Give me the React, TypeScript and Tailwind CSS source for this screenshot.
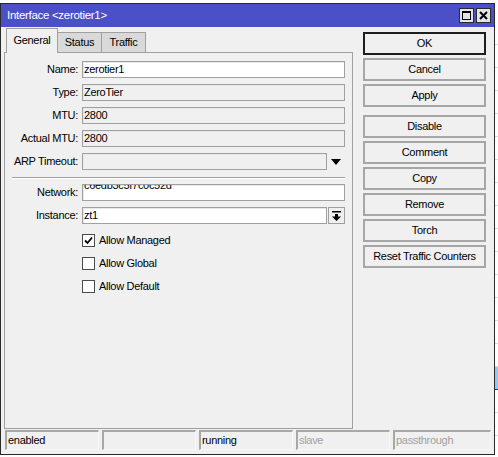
import React from "react";

function Field({ label, value, white, width = "w-[263px]", children, shift }: { label: string; value?: string; white?: boolean; width?: string; children?: React.ReactNode; shift?: boolean }) {
  return (
    <div className="flex items-center h-[17px]">
      <div className="w-[73px] text-right whitespace-nowrap pr-[0px]">{label}</div>
      <div className={`ml-[4px] ${width} h-[17px] border border-[#a0a0a0] shadow-[inset_1px_1px_0_#e8e8e8] ${white ? "bg-white" : "bg-[#f0f0f0]"} overflow-hidden pl-[1px] leading-[15px] whitespace-nowrap`}>
        {shift ? <div className="mt-[-7px]">{value}</div> : value}
      </div>
      {children}
    </div>
  );
}

function Check({ label, checked }: { label: string; checked?: boolean }) {
  return (
    <div className="flex items-center h-[17px] pl-[77px]">
      <div className="w-[13px] h-[13px] border border-[#4a4a4a] bg-white flex items-center justify-center">
        {checked && (
          <svg width="9" height="9" viewBox="0 0 9 9">
            <path d="M1 4.5 L3.5 7 L8 1.5" stroke="#000" strokeWidth="1.8" fill="none" />
          </svg>
        )}
      </div>
      <span className="ml-[4px]">{label}</span>
    </div>
  );
}

function Btn({ label, ok, className = "" }: { label: string; ok?: boolean; className?: string }) {
  return (
    <div className={`h-[23px] flex items-center justify-center bg-[#f0f0f0] ${ok ? "border-2 border-[#1e1e1e]" : "border-2 border-[#a6a6a6]"} ${className}`}>
      {label}
    </div>
  );
}

function Cell({ text, dim, w }: { text: string; dim?: boolean; w: string }) {
  return (
    <div className={`${w} h-[20px] border-t-2 border-l-2 border-[#a8a8a8] border-r border-b border-r-[#f8f8f8] border-b-[#f8f8f8] flex items-center pl-[1px] ${dim ? "text-[#a0a0a0]" : "text-black"}`}>
      {text}
    </div>
  );
}

export default function App() {
  const bgRows = Array.from({ length: 20 });
  return (
    <div className="relative w-[498px] h-[457px] bg-white overflow-hidden font-['Liberation_Sans',Arial,sans-serif] text-[11px] tracking-[-0.3px] text-black">
      {/* background window content */}
      <div className="absolute inset-0 flex flex-col pt-[22px]">
        {bgRows.map((_, i) => (
          <div key={i} className={`h-[23px] shrink-0 border-b ${i === 15 ? "bg-[#99c8ef] border-[#3a3a3a]" : "border-[#dcdcdc]"}`} />
        ))}
      </div>

      {/* dialog window */}
      <div className="absolute left-0 top-[3px] w-[495px] h-[452px] border border-[#2a2a2a] bg-[#f0f0f0] flex flex-col">
        {/* title bar */}
        <div className="h-[23px] bg-[#4c50c8] flex items-center pl-[6px] pr-[3px] text-white">
          <span className="flex-1 text-[11.5px]">Interface &lt;zerotier1&gt;</span>
          <div className="w-[15px] h-[15px] bg-[#e4e4e4] border border-[#2a2a2a] flex items-center justify-center">
            <div className="w-[9px] h-[9px] border border-black border-t-2" />
          </div>
          <div className="ml-[2px] w-[15px] h-[15px] bg-[#e4e4e4] border border-[#2a2a2a] flex items-center justify-center">
            <svg width="9" height="9" viewBox="0 0 9 9">
              <path d="M1 1 L8 8 M8 1 L1 8" stroke="#000" strokeWidth="2" />
            </svg>
          </div>
        </div>

        {/* body */}
        <div className="flex-1 flex flex-col">
          <div className="flex h-[402px]">
            {/* left: tabs + panel */}
            <div className="ml-[3px] w-[349px] pt-[1px] flex flex-col">
              <div className="flex items-end h-[24px] pl-[2px]">
                <div className="relative z-10 mb-[-1px] w-[52px] h-[25px] bg-[#f0f0f0] border-t border-l border-r border-[#a0a0a0] flex items-center justify-center pb-[2px]">
                  General
                </div>
                <div className="w-[44px] h-[20px] bg-[#d9d9d9] border-t border-r border-[#a0a0a0] flex items-center justify-center">
                  Status
                </div>
                <div className="w-[44px] h-[20px] bg-[#d9d9d9] border-t border-r border-[#a0a0a0] flex items-center justify-center">
                  Traffic
                </div>
              </div>
              <div className="flex-1 border border-[#a0a0a0] bg-[#f0f0f0] pt-[8px] flex flex-col">
                <div className="flex flex-col gap-[6px]">
                  <Field label="Name:" value="zerotier1" white />
                  <Field label="Type:" value="ZeroTier" />
                  <Field label="MTU:" value="2800" />
                  <Field label="Actual MTU:" value="2800" />
                  <Field label="ARP Timeout:" value="" width="w-[245px]">
                    <div className="w-[18px] flex items-center justify-center">
                      <svg width="10" height="6" viewBox="0 0 10 6">
                        <path d="M0 0 H10 L5 6 Z" fill="#000" />
                      </svg>
                    </div>
                  </Field>
                </div>
                <div className="ml-[7px] w-[333px] h-[2px] mt-[7px] border-t border-[#a0a0a0] border-b border-b-white" />
                <div className="flex flex-col gap-[6px] mt-[5px]">
                  <Field label="Network:" value="c6edb3c5f7c0c52d" white shift />
                  <Field label="Instance:" value="zt1" white width="w-[245px]">
                    <div className="ml-[1px] w-[17px] h-[17px] border border-[#a0a0a0] bg-[#f0f0f0] flex items-center justify-center">
                      <svg width="9" height="10" viewBox="0 0 9 10">
                        <rect x="0" y="0" width="9" height="1.5" fill="#000" />
                        <path d="M3 3 H6 V5.5 H9 L4.5 10 L0 5.5 H3 Z" fill="#000" />
                      </svg>
                    </div>
                  </Field>
                </div>
                <div className="flex flex-col gap-[6px] mt-[8px]">
                  <Check label="Allow Managed" checked />
                  <Check label="Allow Global" />
                  <Check label="Allow Default" />
                </div>
              </div>
            </div>

            {/* right: buttons */}
            <div className="ml-[10px] w-[123px] pt-[5px] flex flex-col gap-[3px]">
              <Btn label="OK" ok />
              <Btn label="Cancel" />
              <Btn label="Apply" />
              <Btn label="Disable" className="mt-[5px]" />
              <Btn label="Comment" />
              <Btn label="Copy" />
              <Btn label="Remove" />
              <Btn label="Torch" />
              <Btn label="Reset Traffic Counters" />
            </div>
          </div>

          {/* status bar */}
          <div className="flex gap-[3px] pl-[4px] pr-[3px] mt-[1px]">
            <Cell text="enabled" w="w-[94px]" />
            <Cell text="" w="w-[94px]" />
            <Cell text="running" w="w-[94px]" />
            <Cell text="slave" dim w="w-[94px]" />
            <Cell text="passthrough" dim w="flex-1" />
          </div>
        </div>
      </div>
    </div>
  );
}
